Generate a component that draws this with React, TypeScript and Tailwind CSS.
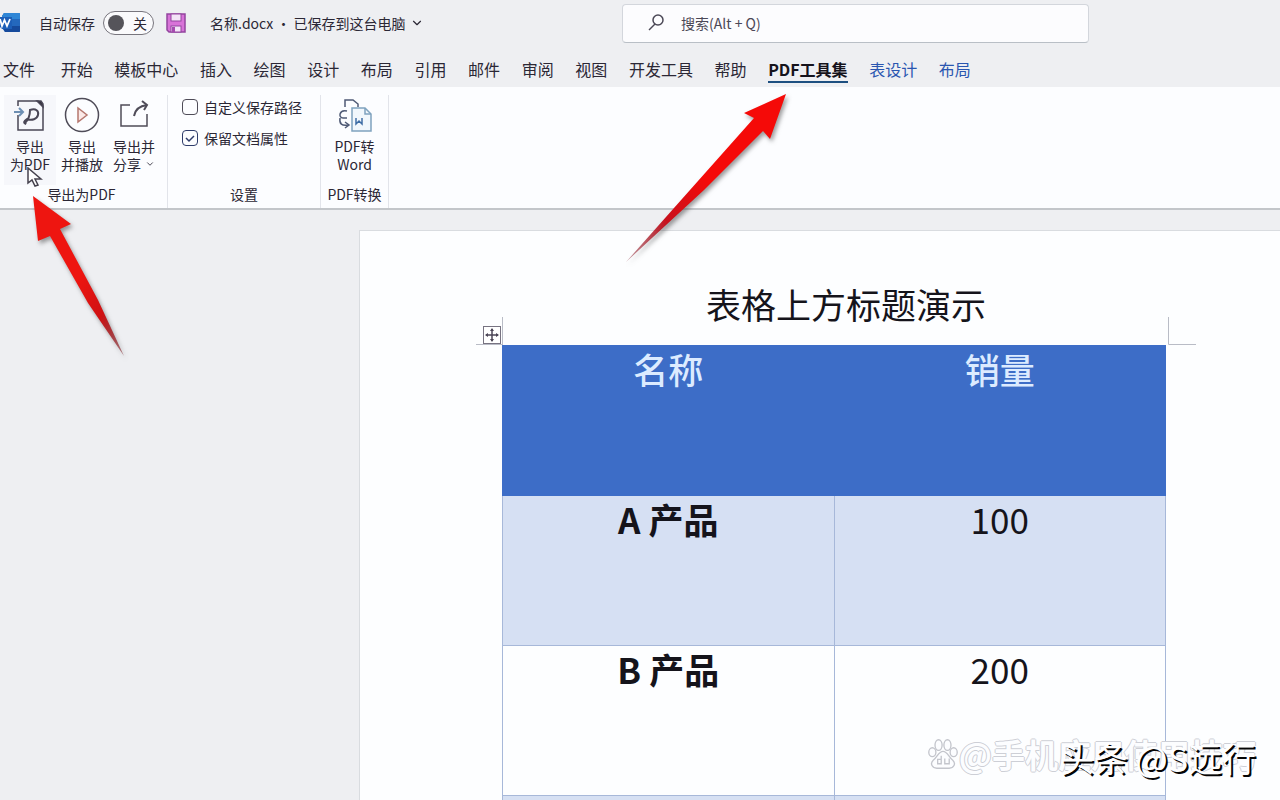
import { ChevronDown } from "lucide-react";

const tabs = [
  { name: "文件" },
  { name: "开始" },
  { name: "模板中心" },
  { name: "插入" },
  { name: "绘图" },
  { name: "设计" },
  { name: "布局" },
  { name: "引用" },
  { name: "邮件" },
  { name: "审阅" },
  { name: "视图" },
  { name: "开发工具" },
  { name: "帮助" },
  { name: "PDF工具集", current: true },
  { name: "表设计", contextual: true },
  { name: "布局", contextual: true },
];

const products = [
  { name: "A 产品", amount: "100" },
  { name: "B 产品", amount: "200" },
  { name: "", amount: "" },
];

function WordLogo() {
  return (
    <svg className="h-5 w-5 shrink-0" viewBox="0 0 20 20" aria-hidden="true">
      <path d="M4 0h15a1 1 0 0 1 1 1v17a1 1 0 0 1-1 1H5l-3-4V3z" fill="#2468bd" />
      <path d="M4 0h15a1 1 0 0 1 1 1v5H2V3z" fill="#2f86d6" />
      <path d="M2 13h18v5a1 1 0 0 1-1 1H5z" fill="#164a9c" />
      <path d="M0 4h12v12H2l-2-2z" fill="#1d5fb8" />
      <path
        d="M0 6l2 7 2.500-6 2.500 6 3-7"
        fill="none"
        stroke="#fff"
        strokeWidth="1.800"
      />
    </svg>
  );
}

function SaveIcon() {
  return (
    <svg className="h-5 w-5" viewBox="0 0 20 20" aria-hidden="true">
      <path
        d="M1 1h18v18H3l-2-2z"
        fill="#d873d8"
        stroke="#93459f"
        strokeWidth="1.500"
      />
      <rect x="5" y="1" width="10" height="7" fill="#f3e4f7" stroke="#93459f" />
      <rect x="5" y="13" width="10" height="6" fill="#f3e4f7" stroke="#93459f" />
      <path d="M6 14h3v5H6z" fill="#a64bb0" />
    </svg>
  );
}

function ExportPdfIcon() {
  return (
    <svg
      className="h-9 w-9"
      viewBox="0 0 36 36"
      fill="none"
      stroke="#4a4756"
      strokeWidth="1.500"
      aria-hidden="true"
    >
      <path d="M6 9V4h20l5 5v24H6V18" />
      <path d="M25 4l6 6V7l-2-3z" fill="#33303c" />
      <path
        d="M13 26c3-3 5-8 5-13 6-2 9 1 8 5s-6 6-11 4c-3 2-4 4-1 5z"
        strokeWidth="2"
      />
      <path d="M2 15h8M7 11l4 4-4 4" stroke="#6d8fb3" strokeWidth="2" />
    </svg>
  );
}

function PlayIcon() {
  return (
    <svg
      className="h-9 w-9"
      viewBox="0 0 36 36"
      fill="none"
      strokeWidth="1.500"
      aria-hidden="true"
    >
      <circle cx="18" cy="18" r="16.500" stroke="#4f4c58" />
      <path d="M14 11v14l9-7z" fill="#fbe9e7" stroke="#b5776f" />
    </svg>
  );
}

function ShareIcon() {
  return (
    <svg
      className="h-9 w-9"
      viewBox="0 0 36 36"
      fill="none"
      stroke="#4f4c58"
      strokeWidth="1.500"
      aria-hidden="true"
    >
      <path d="M14 8H5v21h26V17" />
      <path d="M18 19c1-6 5-10 13-11" strokeWidth="2" />
      <path d="M26 4l5 4-3 5" strokeWidth="2" />
    </svg>
  );
}

function ConvertIcon() {
  return (
    <svg
      className="h-9 w-9"
      viewBox="0 0 36 36"
      fill="none"
      strokeWidth="1.500"
      aria-hidden="true"
    >
      <path d="M8 10V3h8l5 4v3" stroke="#4f5a75" />
      <path d="M10 14C2 12 1 21 6 21h4M3 21c-1 6 2 8 8 7" stroke="#4f5a75" />
      <path d="M8 25l4 3-4 3" stroke="#4f5a75" />
      <path d="M15 11h13l6 6v17H15z" fill="#f1f7fc" stroke="#7fa3bf" />
      <path d="M28 11v6h6" stroke="#7fa3bf" />
      <path d="M19 21v6l3-3 3 3v-6" stroke="#3f6ea5" />
    </svg>
  );
}

function TitleBar() {
  return (
    <header className="flex h-[46px] shrink-0 items-center text-sm">
      <WordLogo />
      <label htmlFor="autosave" className="ml-[19px]">
        自动保存
      </label>
      <button
        id="autosave"
        type="button"
        role="switch"
        aria-checked="false"
        className="ml-2 flex h-6 w-[51px] items-center justify-between rounded-full border border-[#77757d] bg-[#fafafc] pl-1 pr-1.5"
      >
        <span className="h-4 w-4 rounded-full bg-[#55545a]" />
        关
      </button>
      <button type="button" aria-label="保存" className="ml-3">
        <SaveIcon />
      </button>
      <button type="button" className="ml-6 flex items-center gap-1">
        名称.docx • 已保存到这台电脑
        <ChevronDown className="h-3.5 w-3.5" />
      </button>
      <div className="ml-auto mr-[191px] flex h-[39px] w-[467px] items-center rounded border border-[#d3d6dc] border-b-[#b9bfc6] bg-[#fcfcfe] pl-6">
        <svg
          className="h-5 w-5 shrink-0"
          viewBox="0 0 20 20"
          fill="none"
          stroke="#4b4856"
          strokeWidth="1.500"
          aria-hidden="true"
        >
          <circle cx="11" cy="7" r="5" />
          <path d="M8 11l-6 6" />
        </svg>
        <input
          type="search"
          aria-label="搜索"
          placeholder="搜索(Alt + Q)"
          className="ml-3.5 w-full bg-transparent outline-none placeholder:text-[#4b4856]"
        />
      </div>
    </header>
  );
}

function TabStrip() {
  return (
    <nav className="flex h-[41px] w-[971px] shrink-0 items-end justify-between pb-1 pl-[3px]">
      {tabs.map((tab, index) => (
        <button
          key={index}
          type="button"
          className={
            tab.current
              ? "border-b-2 border-[#1d4f80] font-bold text-[#15131c]"
              : tab.contextual
                ? "border-b-2 border-transparent text-[#2a56b0]"
                : "border-b-2 border-transparent first:mr-1"
          }
        >
          {tab.name}
        </button>
      ))}
    </nav>
  );
}

function Ribbon() {
  return (
    <div className="flex h-[123px] shrink-0 border-b-2 border-[#c3c6ca] bg-[#fcfdff] pt-2 text-sm leading-[18px]">
      <section className="flex w-[168px] flex-col justify-between border-r border-[#e2e4ea] pl-1">
        <div className="flex">
          <button
            type="button"
            className="flex h-[90px] w-[52px] flex-col items-center gap-1 bg-[#f6f7fb] pt-0.5"
          >
            <ExportPdfIcon />
            <span>
              导出
              <br />
              为PDF
            </span>
          </button>
          <button
            type="button"
            className="flex h-[90px] w-[52px] flex-col items-center gap-1 pt-0.5"
          >
            <PlayIcon />
            <span>
              导出
              <br />
              并播放
            </span>
          </button>
          <button
            type="button"
            className="flex h-[90px] w-[52px] flex-col items-center gap-1 pt-0.5"
          >
            <ShareIcon />
            <span>
              导出并
              <br />
              <span className="flex items-center gap-1">
                分享 <ChevronDown className="h-2.5 w-2.5" />
              </span>
            </span>
          </button>
        </div>
        <h2 className="pb-[5px] pr-2 text-center">导出为PDF</h2>
      </section>
      <section className="flex w-[153px] flex-col justify-between border-r border-[#e2e4ea] pl-3.5">
        <div className="flex flex-col gap-[13px] pt-[3px]">
          <label className="flex items-center gap-1.5 whitespace-nowrap">
            <input
              type="checkbox"
              className="h-4 w-4 appearance-none rounded-sm border border-[#4f4c58]"
            />
            自定义保存路径
          </label>
          <label className="flex items-center gap-1.5 whitespace-nowrap">
            <span className="relative flex">
              <input
                type="checkbox"
                defaultChecked
                className="h-4 w-4 appearance-none rounded-sm border border-[#2f3d6b]"
              />
              <svg
                className="pointer-events-none absolute inset-0 h-4 w-4"
                viewBox="0 0 16 16"
                fill="none"
                stroke="#2f3d6b"
                strokeWidth="1.500"
                aria-hidden="true"
              >
                <path d="M4 8l3 3 5-5" />
              </svg>
            </span>
            保留文档属性
          </label>
        </div>
        <h2 className="pb-[5px] pr-3.5 text-center">设置</h2>
      </section>
      <section className="flex w-[68px] flex-col justify-between border-r border-[#e2e4ea]">
        <button
          type="button"
          className="flex flex-col items-center gap-1 pt-0.5"
        >
          <ConvertIcon />
          <span>
            PDF转
            <br />
            Word
          </span>
        </button>
        <h2 className="whitespace-nowrap pb-[5px] text-center">PDF转换</h2>
      </section>
    </div>
  );
}

function DocumentTable() {
  return (
    <div className="relative mt-4">
      {/* move handle and margin marks */}
      <svg
        className="absolute -left-[26px] -top-7 h-7 w-7"
        viewBox="0 0 28 28"
        fill="none"
        stroke="#b9bcc6"
        aria-hidden="true"
      >
        <path d="M0 27.500h27M26.500 0v28" />
        <rect x="7.500" y="9.500" width="17" height="17" fill="#fff" stroke="#777381" />
        <path d="M16 12v12M10 18h12" stroke="#4c4657" strokeWidth="1.500" />
        <path
          d="M14 14l2-3 2 3zM14 22l2 3 2-3zM12 16l-3 2 3 2zM20 16l3 2-3 2z"
          fill="#4c4657"
          stroke="none"
        />
      </svg>
      <svg
        className="absolute -right-[30px] -top-7 h-7 w-7"
        viewBox="0 0 28 28"
        fill="none"
        stroke="#b9bcc6"
        aria-hidden="true"
      >
        <path d="M.5 0v27.500H28" />
      </svg>
      <table className="w-full table-fixed border-collapse text-center text-[35px] leading-[46px] text-[#15141b]">
        <thead>
          <tr className="h-[150px] bg-[#3d6dc7] align-top text-[#dcebff]">
            <th className="border border-[#3d6dc7] font-medium">名称</th>
            <th className="border border-[#3d6dc7] font-medium">销量</th>
          </tr>
        </thead>
        <tbody>
          {products.map((product, index) => (
            <tr key={index} className="h-[150px] align-top odd:bg-[#d6e0f3]">
              <th className="border border-[#a7b8d9] font-bold">
                {product.name}
              </th>
              <td className="border border-[#a7b8d9]">{product.amount}</td>
            </tr>
          ))}
        </tbody>
      </table>
    </div>
  );
}

function RedArrows() {
  return (
    <svg
      className="pointer-events-none absolute left-0 top-0 h-[400px] w-[820px] drop-shadow-[2px_3px_2px_rgba(60,60,60,0.5)]"
      viewBox="0 0 820 400"
      aria-hidden="true"
    >
      <defs>
        <linearGradient id="tail-right" x1="0" y1="1" x2="1" y2="0">
          <stop offset="0" stopColor="#7a1020" stopOpacity="0.4" />
          <stop offset="0.250" stopColor="#c8101c" />
          <stop offset="0.500" stopColor="#f50a08" />
        </linearGradient>
        <linearGradient id="tail-left" x1="1" y1="1" x2="0" y2="0">
          <stop offset="0" stopColor="#701018" stopOpacity="0.5" />
          <stop offset="0.250" stopColor="#cf1113" />
          <stop offset="0.500" stopColor="#ee1510" />
        </linearGradient>
      </defs>
      <path
        d="M786 94L744 113 754 118 626 262 704 190 763 131 770 139Z"
        fill="url(#tail-right)"
      />
      <path
        d="M33 196L38 241 50 236 88 303 124 356 98 300 60 229 71 224Z"
        fill="url(#tail-left)"
      />
    </svg>
  );
}

function Watermark() {
  return (
    <>
      <div className="absolute bottom-[22px] right-6 flex items-center whitespace-nowrap text-[33px] font-bold leading-[48px] text-[#fcfdff] [text-shadow:1px_0_#cdcfd6,-1px_0_#cdcfd6,0_1px_#cdcfd6,0_-1px_#cdcfd6]">
        <svg
          className="h-8 w-8"
          viewBox="0 0 36 36"
          fill="#fcfdff"
          stroke="#c3c5cc"
          strokeWidth="1.500"
          aria-hidden="true"
        >
          <ellipse cx="6" cy="16" rx="4" ry="5" />
          <ellipse cx="13" cy="8" rx="4" ry="6" />
          <ellipse cx="23" cy="8" rx="4" ry="6" />
          <ellipse cx="30" cy="16" rx="4" ry="5" />
          <path d="M18 15c-5 0-6 6-11 10-4 4-1 9 4 9h14c5 0 8-5 4-9-5-4-6-10-11-10z" />
          <path d="M16 20v9h-4v-5h4M20 23v6h5v-6" fill="none" />
        </svg>
        @手机应用使用技巧
      </div>
      <div className="absolute bottom-[18px] right-6 whitespace-nowrap text-[34px] leading-[48px] text-white [text-shadow:2px_2px_#050505]">
        头条 @S远行
      </div>
    </>
  );
}

export default function App() {
  return (
    <div className="relative flex h-screen flex-col overflow-hidden bg-[#eeeff2] font-['Noto_Sans_CJK_SC',sans-serif] text-base text-[#2b2735]">
      <TitleBar />
      <TabStrip />
      <Ribbon />
      <main className="flex min-h-0 flex-1 pl-[359px] pt-5">
        <article className="flex-1 border-l border-t border-[#d9dce0] bg-[#fdfeff] pl-[142px] pr-[114px] pt-12">
          <h1 className="pl-6 text-center text-[35px] leading-[50px] text-[#15141b]">
            表格上方标题演示
          </h1>
          <DocumentTable />
        </article>
      </main>
      <svg
        className="pointer-events-none absolute left-[27px] top-[167px] h-5 w-4"
        viewBox="0 0 16 20"
        aria-hidden="true"
      >
        <path
          d="M1 1v15l4-3 3 6 3-1-3-6h6z"
          fill="#fff"
          stroke="#45424e"
          strokeWidth="1.500"
        />
      </svg>
      <RedArrows />
      <Watermark />
    </div>
  );
}
